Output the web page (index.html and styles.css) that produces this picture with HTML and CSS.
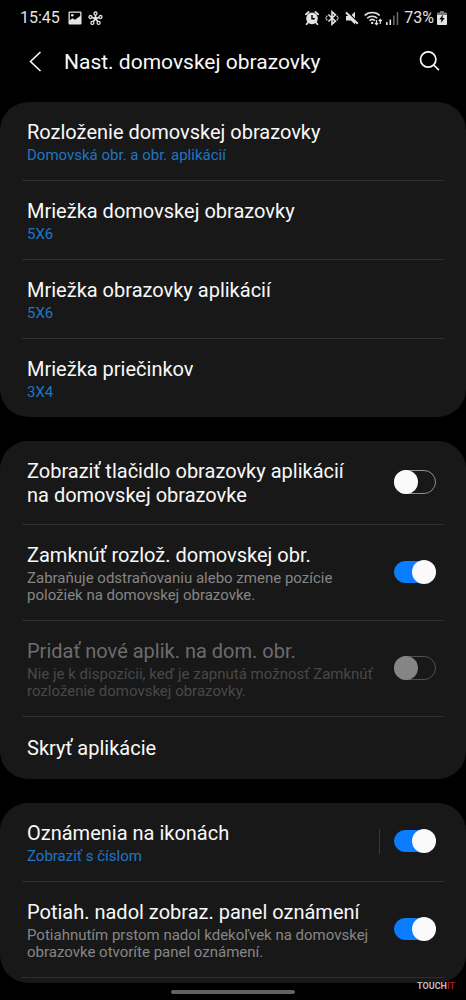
FILE: index.html
```html
<!DOCTYPE html>
<html lang="sk">
<head>
<meta charset="utf-8">
<meta name="viewport" content="width=device-width, initial-scale=1">
<title>Nast. domovskej obrazovky</title>
<link rel="stylesheet" href="styles.css">
</head>
<body>
<div class="status">
  <div class="status-group">
    <span class="status-text">15:45</span>
    <svg class="image-icon" width="14" height="14" viewBox="0 0 14 14"><path fill="currentColor" fill-rule="evenodd" d="M1.500 0.500h11a1 1 0 0 1 1 1v11a1 1 0 0 1-1 1h-11a1 1 0 0 1-1-1v-11a1 1 0 0 1 1-1zM1.800 1.800v7.400l2.700-2 2.500 1.600 5.200-3.800V1.800z"/><circle cx="4.300" cy="4.300" r="1.300" fill="currentColor"/></svg>
    <svg class="hub-icon" width="15" height="15" viewBox="0 0 15 15" fill="none" stroke="currentColor" stroke-width="1.300"><path stroke-width="1.600" d="M7.500 7.500V4M7.500 7.500L4 6.400M7.500 7.500l3.500-1.100M7.500 7.500L5.300 10.500M7.500 7.500l2.200 3"/><circle cx="7.500" cy="2.500" r="1.500"/><circle cx="2.500" cy="6" r="1.500"/><circle cx="12.500" cy="6" r="1.500"/><circle cx="4.400" cy="11.900" r="1.500"/><circle cx="10.600" cy="11.900" r="1.500"/><circle cx="7.500" cy="7.500" r="1.200" fill="currentColor"/></svg>
  </div>
  <div class="status-group">
    <svg width="14" height="14" viewBox="0 0 14 14"><path d="M0.900 3.400L3.600 1M13.100 3.400L10.400 1M3 11.500L1.600 13.200M11 11.500l1.400 1.700" stroke="currentColor" stroke-width="1.800" stroke-linecap="round"/><circle cx="7" cy="7.400" r="5.800" fill="currentColor"/><path d="M7 4v3.700h2.800" fill="none" stroke="#000" stroke-width="1.400"/></svg>
    <svg class="bt-icon" width="14" height="16" viewBox="0 0 14 16" fill="none" stroke="currentColor"><path stroke-width="1.600" d="M3.400 4.500l7 6.700L7 14.200V1.800l3.400 3-7 6.700"/><path stroke-width="1.600" stroke-linecap="round" d="M1.800 6.200v.1M1.800 9.700v.1M12.200 6.200v.1M13 8v.1M12.200 9.700v.1M1 8v.1"/></svg>
    <svg class="mute-icon" width="14" height="14" viewBox="0 0 14 14"><path fill="currentColor" d="M1 5h3.200L10 10.800V13.500L5.800 9.600H1zM10 .8v6.400L6.600 3.900z"/><path d="M1 1.500l11.800 11.300" stroke="currentColor" stroke-width="2"/></svg>
    <svg class="wifi-icon" width="19" height="15" viewBox="0 0 19 15" fill="none" stroke="currentColor"><path stroke-width="1.600" d="M.700 4.500c4-4.100 11-4.100 15 0M3.200 7.300c2.700-2.700 7.300-2.700 10 0M5.500 9.700c1.500-1.400 3.900-1.400 5.400 0"/><circle cx="8.200" cy="11.900" r="1.200" fill="currentColor" stroke="none"/><path stroke-width="1.200" d="M12.500 9v4.500M11 12l1.500 1.700L14 12M16.300 13V8.500M14.800 10l1.500-1.700L17.800 10"/></svg>
    <svg class="signal-icon" width="13" height="14" viewBox="0 0 13 14"><path fill="currentColor" d="M0 11h1.600v3H0zM3.500 8.500h1.600V14H3.500z"/><path fill="#666" d="M7 4.500h1.600V14H7zM10.700 1h1.600v13h-1.600z"/></svg>
    <span class="status-text battery-text">73%</span>
    <svg class="battery-icon" width="10" height="14" viewBox="0 0 10 14"><path fill="#777" d="M3 0h4v1.500h2a1 1 0 0 1 1 1V5H0V2.500a1 1 0 0 1 1-1h2z"/><path fill="currentColor" d="M0 4h10v9a1 1 0 0 1-1 1H1a1 1 0 0 1-1-1z"/><path d="M6 3.500L2.300 8.500h2.200L4 12l3.700-5H5.500z" fill="#000"/></svg>
  </div>
</div>
<header class="header">
  <button class="icon-button" aria-label="Späť"><svg width="14" height="22" viewBox="0 0 14 22"><path d="M12.500 1L2.500 10.500l10 9.500" fill="none" stroke="currentColor" stroke-width="1.600"/></svg></button>
  <h1>Nast. domovskej obrazovky</h1>
  <button class="icon-button" aria-label="Hľadať"><svg width="22" height="22" viewBox="0 0 22 22" fill="none" stroke="currentColor" stroke-width="1.700"><circle cx="9.200" cy="8.500" r="7.700"/><path d="M14.700 14l5.200 5.200"/></svg></button>
</header>
<main class="content">
  <ul class="card">
    <li><button class="row"><span class="text"><span class="title">Rozloženie domovskej obrazovky</span><span class="value">Domovská obr. a obr. aplikácií</span></span></button></li>
    <li><button class="row"><span class="text"><span class="title">Mriežka domovskej obrazovky</span><span class="value">5X6</span></span></button></li>
    <li><button class="row"><span class="text"><span class="title">Mriežka obrazovky aplikácií</span><span class="value">5X6</span></span></button></li>
    <li><button class="row"><span class="text"><span class="title">Mriežka priečinkov</span><span class="value">3X4</span></span></button></li>
  </ul>
  <ul class="card">
    <li><label class="row single"><span class="text"><span class="title">Zobraziť tlačidlo obrazovky aplikácií na&nbsp;domovskej obrazovke</span></span><input class="switch" type="checkbox" role="switch"></label></li>
    <li><label class="row"><span class="text"><span class="title">Zamknúť rozlož. domovskej obr.</span><span class="note">Zabraňuje odstraňovaniu alebo zmene pozície položiek na domovskej obrazovke.</span></span><input class="switch" type="checkbox" role="switch" checked></label></li>
    <li><label class="row disabled"><span class="text"><span class="title">Pridať nové aplik. na dom. obr.</span><span class="note">Nie je k dispozícii, keď je zapnutá možnosť Zamknúť rozloženie domovskej obrazovky.</span></span><input class="switch" type="checkbox" role="switch" disabled></label></li>
    <li><button class="row tall"><span class="text"><span class="title">Skryť aplikácie</span></span></button></li>
  </ul>
  <ul class="card">
    <li><label class="row"><span class="text"><span class="title">Oznámenia na ikonách</span><span class="value">Zobraziť s číslom</span></span><span class="separator"></span><input class="switch" type="checkbox" role="switch" checked></label></li>
    <li><label class="row"><span class="text"><span class="title">Potiah. nadol zobraz. panel oznámení</span><span class="note">Potiahnutím prstom nadol kdekoľvek na domovskej obrazovke otvoríte panel oznámení.</span></span><input class="switch" type="checkbox" role="switch" checked></label></li>
    <li class="next"></li>
  </ul>
</main>
<footer class="nav"><span class="handle"></span></footer>
<div class="watermark">TOUCH<span>IT</span></div>
</body>
</html>
```
FILE: styles.css
```css
*, *::before, *::after { box-sizing: border-box; }

body {
  position: relative;
  display: flex;
  flex-direction: column;
  height: 100vh;
  margin: 0;
  overflow: hidden;
  background: #000;
  color: #f8f8f8;
  font-family: Roboto, "Noto Sans", sans-serif;
}

svg { display: block; flex: none; }

button {
  border: 0;
  background: none;
  color: inherit;
  font: inherit;
  text-align: left;
}

.status {
  display: flex;
  justify-content: space-between;
  height: 36px;
  padding: 0 19px 0 20px;
  color: #e4e4e4;
}

.status-group { display: flex; align-items: center; }
.status-text { font-size: 16px; line-height: 20px; }
.image-icon { margin-left: 8px; }
.hub-icon { margin-left: 6px; }
.bt-icon { margin-left: 6px; }
.mute-icon { margin-left: 6px; }
.wifi-icon { margin-left: 5px; }
.signal-icon { margin-left: 3px; }
.battery-text { margin-left: 5px; }
.battery-icon { margin-left: 3px; }

.header {
  display: flex;
  align-items: center;
  height: 52px;
  padding: 0 25px 0 28px;
}

.header h1 {
  flex: 1;
  margin: 0 0 0 22px;
  font-size: 21px;
  font-weight: 400;
  line-height: 24px;
}

.icon-button { padding: 0; }

.content {
  flex: 1;
  min-height: 0;
  margin-top: 14px;
  overflow: hidden;
  border-radius: 28px;
}

.card {
  margin: 0 0 24px;
  padding: 0;
  list-style: none;
  border-radius: 28px;
  background: #181818;
}

.card li { margin: 0 22px; }
.card li + li { border-top: 1px solid #303030; }

.row {
  display: flex;
  align-items: center;
  width: 100%;
  padding: 18px 8px 16px 5px;
}

.single { padding-bottom: 17px; }
.tall { padding-top: 19px; padding-bottom: 19px; }

.text { flex: 1; padding-right: 16px; }
.title, .value, .note { display: block; }
.title { font-size: 20px; line-height: 24px; }
.value, .note { margin-top: 3px; font-size: 15px; line-height: 17px; }
.value { color: #1f76c4; }
.note { color: #868686; }
.disabled .title { color: #6c6c6c; }
.disabled .note { color: #484848; }

.switch {
  display: flex;
  align-items: center;
  flex: none;
  width: 42px;
  height: 24px;
  margin: 0 0 4px;
  appearance: none;
}

.single .switch { margin-bottom: 2px; }

.switch::before {
  content: "";
  flex: none;
  width: 42px;
  height: 24px;
  border: 1px solid #909090;
  border-radius: 12px;
}

.switch::after {
  content: "";
  flex: none;
  width: 24px;
  height: 24px;
  margin-left: -42px;
  border-radius: 50%;
  background: #fafafa;
}

.switch:checked::before { height: 22px; border-color: #0a7cff; background: #0a7cff; }
.switch:checked::after { margin-left: -24px; }
.switch:disabled::before { border-color: #505050; }
.switch:disabled::after { background: #858585; }

.separator {
  width: 1px;
  height: 25px;
  margin: 0 14px 4px 0;
  background: #383838;
}

.next { height: 60px; }

.nav {
  display: flex;
  justify-content: center;
  height: 17px;
  padding-top: 7px;
}

.handle {
  width: 124px;
  height: 4px;
  border-radius: 2px;
  background: #626262;
}

.watermark {
  position: absolute;
  right: 11px;
  bottom: 8px;
  color: #bdbdbd;
  font-size: 9px;
  font-weight: 700;
  line-height: 12px;
}

.watermark span { color: #a51c24; }
```
